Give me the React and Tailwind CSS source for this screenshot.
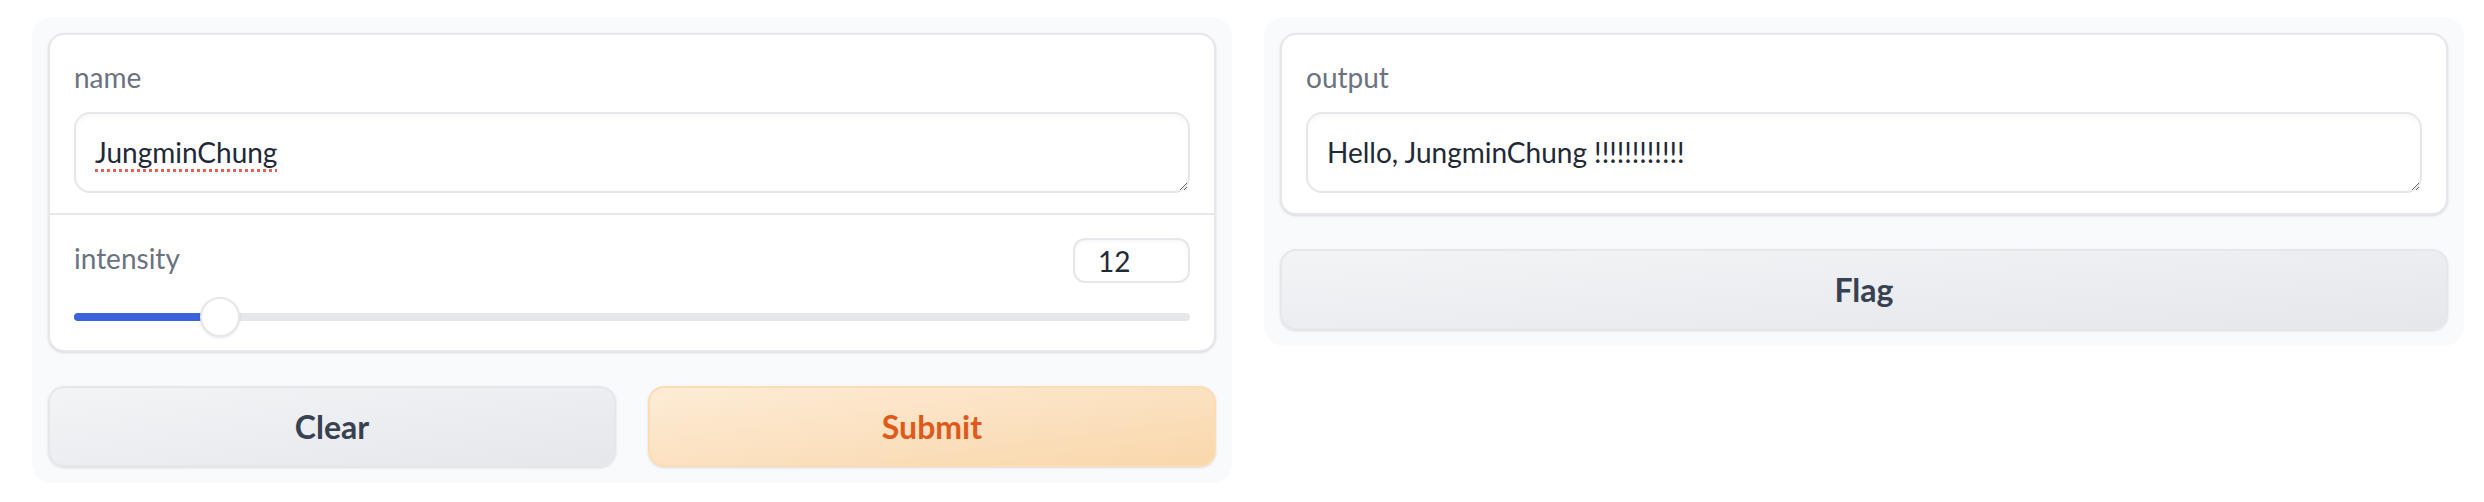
import React from 'react';

// slider value → position on the track (value 12 of range 0..100 with inset thumb)
const sliderPct = 11.57;

const Label = ({ children }) => (
  <div className="h-[40px] flex items-center text-[28px] leading-none text-[#6b7280]">{children}</div>
);

const TextBox = ({ value, spell }) => (
  <textarea
    readOnly
    rows={1}
    value={value}
    className={`block w-full h-[81px] resize-y rounded-[16px] border-2 border-[#e5e7eb] bg-white px-[19px] py-[17px] text-[28px] leading-[42px] text-[#1f2937] shadow-[inset_0_2px_4px_rgba(0,0,0,0.04)] outline-none ${spell ? 'underline decoration-dotted decoration-[#e8604f] decoration-[3px] underline-offset-[6px]' : ''}`}
  />
);

const Btn = ({ children, primary }) => (
  <button
    className={
      primary
        ? 'flex-1 h-[81px] rounded-[16px] border-2 border-[#fcdcb5] bg-gradient-to-br from-[#fdecd6] to-[#f9d7ab] text-[32px] font-bold text-[#e0591c] shadow-sm'
        : 'flex-1 h-[81px] rounded-[16px] border-2 border-[#e5e7eb] bg-gradient-to-br from-[#f3f4f6] to-[#e5e7eb] text-[32px] font-bold text-[#374151] shadow-sm'
    }
  >
    {children}
  </button>
);

export default function App() {
  return (
    <div className="min-h-screen bg-white pl-[32px] pr-[20px] pt-[17px]" style={{ fontFamily: 'Lato, "Noto Sans", sans-serif' }}>
      <div className="flex items-start gap-[32px]">
        {/* inputs */}
        <div className="flex-1 rounded-[20px] bg-[#f9fafb] p-4 flex flex-col gap-[34px]">
          <div className="rounded-[16px] border-2 border-[#e5e7eb] bg-white shadow-sm">
            <div className="px-[24px] pt-[22px] pb-[20px] border-b-2 border-[#e5e7eb]">
              <Label>name</Label>
              <div className="mt-[15px]">
                <TextBox value="JungminChung" spell />
              </div>
            </div>
            <div className="px-[24px] pt-[23px] pb-[13px]">
              <div className="flex items-center justify-between h-[45px]">
                <span className="text-[28px] text-[#6b7280] -mt-[6px]">intensity</span>
                <input
                  readOnly
                  value="12"
                  className="w-[117px] h-[45px] rounded-[12px] border-2 border-[#e5e7eb] bg-white pl-[23px] text-[28px] text-[#1f2937] outline-none shadow-[inset_0_2px_4px_rgba(0,0,0,0.04)]"
                />
              </div>
              <div className="relative mt-[14px] h-[40px] flex items-center">
                <div className="w-full h-[8px] rounded-full bg-[#e5e7eb]">
                  <div className="h-full rounded-full bg-[#3b63dd]" style={{ width: `${sliderPct}%` }} />
                </div>
                <div
                  className="absolute top-0 w-[40px] h-[40px] rounded-full border-2 border-[#e5e7eb] bg-white shadow-[0_1px_3px_rgba(0,0,0,0.1)]"
                  style={{ left: `calc(${sliderPct}% - 3px)` }}
                />
              </div>
            </div>
          </div>
          <div className="flex gap-[32px]">
            <Btn>Clear</Btn>
            <Btn primary>Submit</Btn>
          </div>
        </div>

        {/* outputs */}
        <div className="flex-1 rounded-[20px] bg-[#f9fafb] p-4 flex flex-col gap-[34px]">
          <div className="rounded-[16px] border-2 border-[#e5e7eb] bg-white shadow-sm">
            <div className="px-[24px] pt-[22px] pb-[20px]">
              <Label>output</Label>
              <div className="mt-[15px]">
                <TextBox value="Hello, JungminChung !!!!!!!!!!!!" />
              </div>
            </div>
          </div>
          <div className="flex">
            <Btn>Flag</Btn>
          </div>
        </div>
      </div>
    </div>
  );
}
